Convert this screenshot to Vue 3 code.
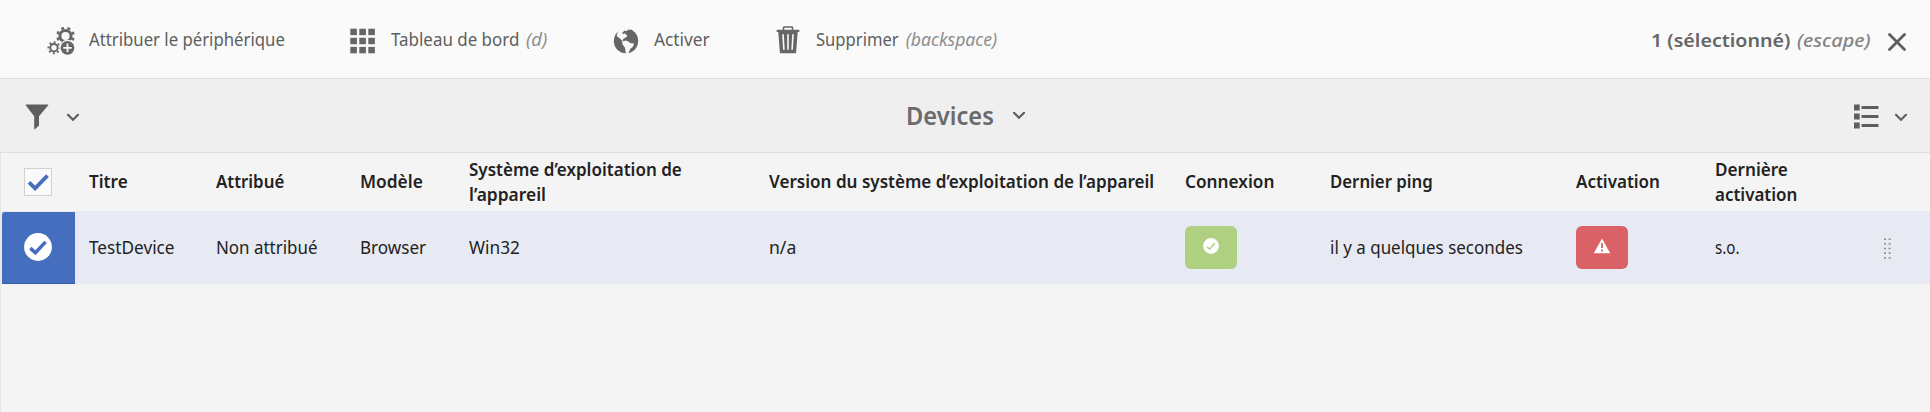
<script setup>
const actions = [
  { id: 'assign', label: 'Attribuer le périphérique', w: 196 },
  { id: 'dashboard', label: 'Tableau de bord', w: 128, key: '(d)', kw: 21 },
  { id: 'publish', label: 'Activer', w: 56 },
  { id: 'remove', label: 'Supprimer', w: 83, key: '(backspace)', kw: 92 }
]

const columns = [
  { id: 'title', lines: [['Titre', 39]], value: 'TestDevice', w: 86 },
  { id: 'assigned', lines: [['Attribué', 68]], value: 'Non attribué', w: 101 },
  { id: 'model', lines: [['Modèle', 63]], value: 'Browser', w: 66 },
  { id: 'os', lines: [['Système d’exploitation de', 213], ['l’appareil', 77]], value: 'Win32', w: 51 },
  { id: 'version', lines: [['Version du système d’exploitation de l’appareil', 385]], value: 'n/a', w: 27 },
  { id: 'connection', lines: [['Connexion', 89]], badge: 'ok' },
  { id: 'ping', lines: [['Dernier ping', 103]], value: 'il y a quelques secondes', w: 193 },
  { id: 'activation', lines: [['Activation', 84]], badge: 'error' },
  { id: 'last', lines: [['Dernière', 73], ['activation', 82]], value: 's.o.', w: 25 }
]

// Condenses a label so that it occupies the given width.
const vFit = {
  mounted(el, { value }) {
    const natural = el.offsetWidth
    el.style.transform = `scaleX(${value / natural})`
    el.style.marginRight = `${value - natural}px`
  }
}
</script>

<template>
  <main class="page">
    <header class="toolbar">
      <button v-for="a in actions" :key="a.id" class="action" :class="a.id">
        <svg v-if="a.id === 'assign'" class="icon" width="28" height="28" viewBox="0 0 28 28">
          <g fill="none" stroke="#666">
            <circle cx="18.5" cy="9" r="5.6" stroke-width="3" />
            <circle cx="18.5" cy="9" r="8.1" stroke-width="2.4" stroke-dasharray="2.9 3.462" stroke-dashoffset="-1.7" />
            <circle cx="7" cy="20.8" r="3.7" stroke-width="2" />
            <circle cx="7" cy="20.8" r="5.5" stroke-width="2" stroke-dasharray="1.9 2.42" stroke-dashoffset="1" />
          </g>
          <circle cx="20.5" cy="20.8" r="8" fill="#fafafa" />
          <circle cx="20.5" cy="20.8" r="6.9" fill="#666" />
          <path d="M20.5 16.6v8.4M16.3 20.8h8.4" stroke="#fafafa" stroke-width="1.8" />
        </svg>
        <svg v-else-if="a.id === 'dashboard'" class="icon" width="26" height="26" viewBox="0 0 26 26" fill="#666">
          <template v-for="y in 3" :key="y">
            <rect v-for="x in 3" :key="x" :x="x * 9 - 8.7" :y="y * 9.1 - 8.4" width="6.6" height="6.4" />
          </template>
        </svg>
        <svg v-else-if="a.id === 'publish'" class="icon" width="26" height="26" viewBox="0 0 26 26">
          <circle cx="13" cy="13" r="12.2" fill="#666" />
          <path fill="#fafafa" d="M4.8 3.5 8.5 1l6-1 3 2-2.8-.2-1 1.5-2-.8L9 5l1.2 1.1 2-.9 1 1.8 1.4.4-1.4 1.9-2.8 1.5-1.1 2.6 3.3-1 2.8.5 1.5 2 4.1.5-1.1 3.3-2.5 2-1.8 4-2.8.5-.8-5.4-2.4-3.2-.7-4.2-2-1.8L3.7 8Z" />
          <path fill="#666" d="m13 6 2.8-3.5 2.5-1L22 4.9l2.5 3.4-1.2.2-.7 3.8-1.4 2.5-2.5-1.2-3.5-.2-3-1.5 1-2.2 2.8-.7 1.1-2Z" />
        </svg>
        <svg v-else class="icon" width="24" height="28" viewBox="0 0 24 28">
          <path d="M7.5 4V1.7q0-.7.7-.7h7.6q.7 0 .7.7V4" fill="none" stroke="#666" stroke-width="1.5" />
          <path fill="#666" d="M.7 3.7h22.6v2.2h-1.6l-1.6 20.5q-.1.8-.9.8H4.8q-.8 0-.9-.8L2.3 5.9H.7Z" />
          <path d="m7 8.2.9 15.5M12 8.2v15.5m5-15.5-.9 15.5" stroke="#fafafa" stroke-width="1.6" />
        </svg>
        <span v-fit="a.w" class="fit">{{ a.label }}</span>
        <em v-if="a.key" v-fit="a.kw" class="fit key">{{ a.key }}</em>
      </button>
      <div class="selection">
        <span v-fit="139" class="fit count">1 (sélectionné)</span>
        <em v-fit="74" class="fit key escape">(escape)</em>
        <svg width="18" height="18" viewBox="0 0 18 18">
          <path d="m1.5 1.5 15 15m0-15-15 15" stroke="#5e5e5e" stroke-width="2.8" stroke-linecap="round" />
        </svg>
      </div>
    </header>

    <nav class="viewbar">
      <button class="filter">
        <svg width="24" height="26" viewBox="0 0 24 26">
          <path d="M1.2.5h21.6q1 0 .3.9L14 12.3v9.1l-4.2 3.8q-.6.4-.6-.4V12.3L.9 1.4Q.3.5 1.2.5Z" fill="#5e5e5e" />
        </svg>
        <svg class="chevron" width="14" height="9" viewBox="0 0 14 9"><path d="m2 1.8 5 4.9 5-4.9" /></svg>
      </button>
      <button class="heading">
        <span v-fit="88" class="fit">Devices</span>
        <svg class="chevron" width="14" height="9" viewBox="0 0 14 9"><path d="m2 1.8 5 4.9 5-4.9" /></svg>
      </button>
      <button class="layout">
        <svg width="26" height="26" viewBox="0 0 26 26" fill="#5e5e5e">
          <template v-for="n in 3" :key="n">
            <rect x="1" :y="n * 9 - 8.5" width="5.7" height="6" />
            <rect x="8.5" :y="n * 9 - 7" width="17" height="3" rx=".6" />
          </template>
        </svg>
        <svg class="chevron" width="14" height="9" viewBox="0 0 14 9"><path d="m2 1.8 5 4.9 5-4.9" /></svg>
      </button>
    </nav>

    <section class="table">
      <div class="row head">
        <div class="check">
          <span class="box">
            <svg width="26" height="26" viewBox="0 0 26 26"><path d="m4 13.4 6.1 6L22.5 6.6" fill="none" stroke="#456ebf" stroke-width="3.8" /></svg>
          </span>
        </div>
        <div v-for="c in columns" :key="c.id" class="cell">
          <div v-for="l in c.lines" :key="l[0]" class="line"><span v-fit="l[1]" class="fit">{{ l[0] }}</span></div>
        </div>
      </div>
      <div class="row item">
        <div class="check">
          <svg width="28" height="28" viewBox="0 0 28 28">
            <circle cx="14" cy="14" r="13.9" fill="#fff" />
            <path d="m6.3 15.1 5.1 4.7L21.6 8.9" fill="none" stroke="#456ebf" stroke-width="3.5" />
          </svg>
        </div>
        <div v-for="c in columns" :key="c.id" class="cell">
          <span v-if="c.badge" class="badge" :class="c.badge">
            <svg v-if="c.badge === 'ok'" width="16" height="16" viewBox="0 0 16 16">
              <circle cx="8" cy="8" r="7.9" fill="#fff" />
              <path d="m4.2 8.8 2.4 2.4 5.2-6.1" fill="none" stroke="#afd080" stroke-width="1.5" />
            </svg>
            <svg v-else width="18" height="16" viewBox="0 0 18 16">
              <path d="m9 .5 8.2 14.8H.8Z" fill="#fff" />
              <path d="M9 5v5m0 1.6v2" stroke="#da6267" stroke-width="1.8" />
            </svg>
          </span>
          <span v-else v-fit="c.w" class="fit">{{ c.value }}</span>
        </div>
        <div class="grip">
          <svg width="8" height="21" viewBox="0 0 8 21" fill="#888b91">
            <template v-for="n in 5" :key="n">
              <rect x="0" :y="n * 4.65 - 4.2" width="2" height="1.5" />
              <rect x="4.6" :y="n * 4.65 - 4.2" width="2" height="1.5" />
            </template>
          </svg>
        </div>
      </div>
    </section>
  </main>
</template>

<style>
body { background: #f4f4f4; }
</style>

<style scoped>
.page {
  box-sizing: border-box;
  height: 412px;
  display: flex;
  flex-direction: column;
  background: #f4f4f4;
  color: #222;
  font: 17.6px/25px "Noto Sans", "Open Sans", sans-serif;
  overflow: hidden;
}
button {
  padding: 0;
  border: 0;
  background: none;
  color: inherit;
  font: inherit;
}
svg { display: block; flex: none; }
.fit {
  display: inline-block;
  flex: none;
  transform-origin: 0 50%;
  white-space: nowrap;
}
.toolbar {
  box-sizing: border-box;
  flex: none;
  display: flex;
  height: 79px;
  padding: 0 24px 0 47px;
  background: #fafafa;
  border-bottom: 1px solid #dedede;
  color: #5e5e5e;
}
.action { display: flex; align-items: center; flex: none; }
.assign { width: 302px; }
.assign .icon { margin: 3px 14px 0 0; }
.dashboard { width: 265px; }
.dashboard .icon { margin: 3px 15px 0 1px; }
.publish { width: 162px; }
.publish .icon { margin: 3px 15px 0 -1px; }
.remove .icon { margin: 2px 16px 0 0; }
.key { color: #8e8e8e; margin-left: 7px; }
.selection {
  display: flex;
  align-items: center;
  margin-left: auto;
  font-size: 18.5px;
}
.count { font-weight: 600; color: #666; }
.escape { font-weight: 500; color: #858585; }
.selection svg { margin: 5px 0 0 17px; }
.viewbar {
  box-sizing: border-box;
  flex: none;
  height: 74px;
  display: grid;
  grid-template-columns: 1fr auto 1fr;
  align-items: center;
  padding: 0 20px 0 25px;
  background: #efefef;
  border-bottom: 1px solid #dfdfdf;
}
.viewbar button { display: flex; align-items: center; }
.filter svg:first-child { margin-top: 3px; }
.layout svg:first-child { margin-top: 3px; }
.chevron path { fill: none; stroke: #5e5e5e; stroke-width: 2.2; stroke-linecap: round; }
.filter .chevron { margin: 4px 0 0 17px; }
.layout { justify-self: end; }
.layout .chevron { margin: 4px 2px 0 15px; }
.viewbar .heading {
  margin-left: -3px;
  font-size: 24.5px;
  font-weight: 600;
  color: #6b6b6b;
}
.heading .chevron { margin-left: 18px; }
.table {
  flex: 1;
  border-left: 1px solid #e6e6e6;
}
.row {
  display: grid;
  grid-template-columns: 87.5px 127.5px 144px 108.5px 300.5px 416px 144.5px 246.5px 138.5px 169.5px 46px;
  align-items: center;
}
.head { height: 58px; padding-bottom: 1px; box-sizing: border-box; font-weight: 600; }
.line { height: 25px; }
.check { display: flex; align-items: center; }
.head .check { padding-left: 23px; }
.box {
  width: 26px;
  height: 26px;
  border: 1px solid #d0d0d0;
  background: #fafafa;
}
.item { height: 73px; background: #e7eaf2; }
.item .check {
  box-sizing: border-box;
  width: 73px;
  height: 72px;
  margin: 1px 0 0 1px;
  padding: 0 0 1px 22px;
  background: #456ebf;
  border-radius: 3px 0 0 0;
  border-bottom: 1px solid #355fb3;
}
.badge {
  box-sizing: border-box;
  display: flex;
  align-items: center;
  justify-content: center;
  width: 52px;
  height: 43px;
  padding-bottom: 3px;
  border-radius: 6px;
}
.ok { background: #afd080; }
.error { background: #da6267; }
.grip { grid-column: 11; padding-top: 1px; }
</style>
